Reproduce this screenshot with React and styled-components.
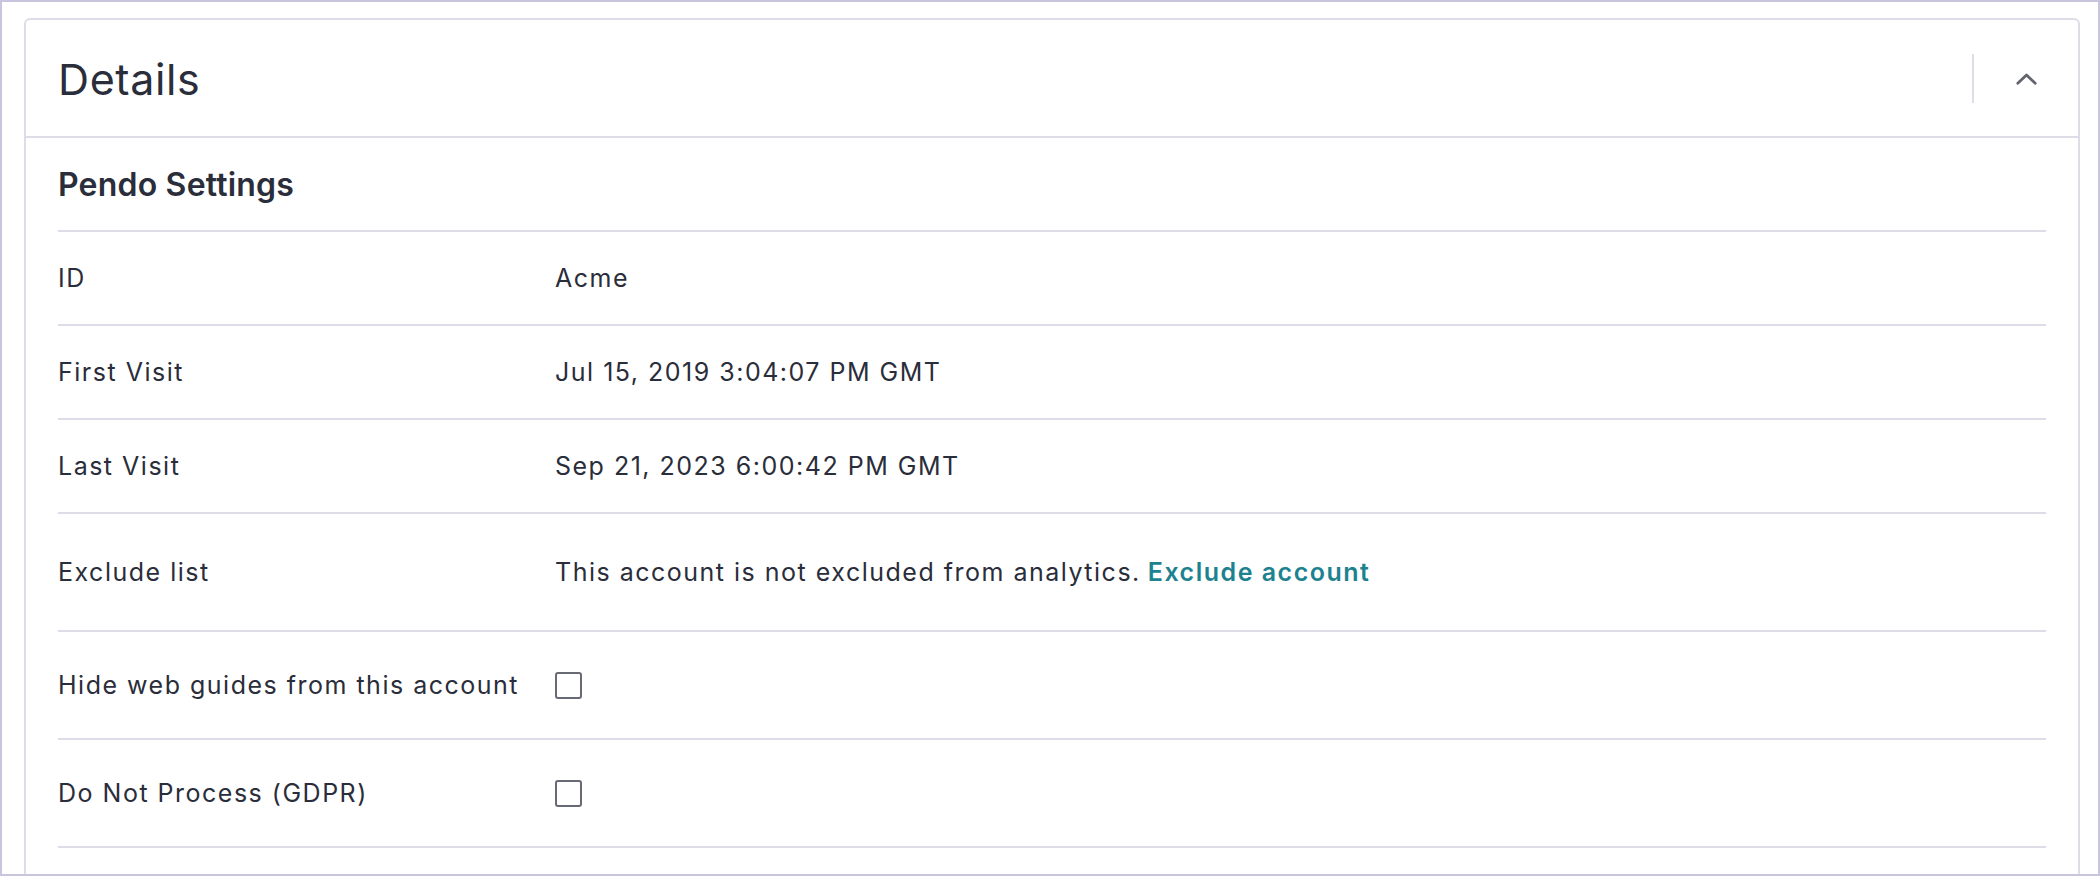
import React, { useState } from 'react';
import styled, { createGlobalStyle } from 'styled-components';

const GlobalStyle = createGlobalStyle`
  html, body {
    margin: 0;
    padding: 0;
    height: 100%;
    overflow: hidden;
    background: #ffffff;
  }
  body {
    font-family: Inter, "Noto Sans", "Liberation Sans", sans-serif;
    color: #2a2d3a;
  }
  * { box-sizing: border-box; }
`;

const Frame = styled.div`
  height: 876px;
  border: 2px solid #c9c5df;
  padding: 16px 18px 0 22px;
  overflow: hidden;
  background: #fff;
`;

const Card = styled.section`
  border: 2px solid #dcdde6;
  border-radius: 6px;
  background: #fff;
  min-height: 1000px;
`;

const Header = styled.header`
  height: 118px;
  display: flex;
  align-items: center;
  gap: 32px;
  padding: 0 32px;
  border-bottom: 2px solid #dcdde6;
`;

const Title = styled.h2`
  flex: 1;
  margin: 0;
  padding-top: 3px;
  font-size: 43px;
  font-weight: 400;
  letter-spacing: 0.6px;
  line-height: 1.2;
  color: #2a2d3a;
`;

const Divider = styled.span`
  width: 2px;
  height: 49px;
  background: #dcdde6;
`;

const ToggleButton = styled.button`
  width: 40px;
  height: 40px;
  margin-top: 2px;
  display: flex;
  align-items: center;
  justify-content: center;
  border: none;
  background: transparent;
  padding: 0;
  cursor: pointer;
  color: #62646e;
`;

const Body = styled.div`
  padding: 0 32px;
`;

const SectionTitle = styled.h3`
  margin: 0;
  padding: 23px 0 21px;
  font-size: 32px;
  font-weight: 600;
  letter-spacing: 0.2px;
  line-height: 48px;
  color: #2a2d3a;
  border-bottom: 2px solid #dcdde6;
`;

const Row = styled.div`
  display: grid;
  grid-template-columns: 25% 1fr;
  align-items: center;
  padding: 28px 0;
  border-bottom: 2px solid #dcdde6;
  font-size: 25px;
  letter-spacing: 1.5px;
  line-height: 36px;
`;

const Label = styled.div`
  color: #2a2d3a;
`;

const Value = styled.div`
  display: flex;
  align-items: center;
  min-height: ${p => p.$tall || 36}px;
  color: #2a2d3a;
`;

const LinkButton = styled.button`
  border: none;
  background: transparent;
  padding: 12px 0 12px 7px;
  font: inherit;
  font-weight: 600;
  letter-spacing: inherit;
  color: #1d8290;
  cursor: pointer;
`;

const Box = styled.input.attrs({ type: 'checkbox' })`
  appearance: none;
  margin: 0;
  width: 27px;
  height: 27px;
  border: 2.5px solid #676a75;
  border-radius: 3px;
  background: #fff;
  cursor: pointer;
  &:checked {
    background: #1d8290;
    border-color: #1d8290;
  }
`;

function Chevron({ open }) {
  return (
    <svg width="21" height="12" viewBox="0 0 21 12" fill="none"
      style={{ transform: open ? 'none' : 'rotate(180deg)' }}>
      <polyline points="1.8,10.2 10.5,2 19.2,10.2" stroke="currentColor"
        strokeWidth="2.8" strokeLinecap="round" strokeLinejoin="round" />
    </svg>
  );
}

const info = [
  { label: 'ID', value: 'Acme' },
  { label: 'First Visit', value: 'Jul 15, 2019 3:04:07 PM GMT' },
  { label: 'Last Visit', value: 'Sep 21, 2023 6:00:42 PM GMT' },
];

export default function App() {
  const [open, setOpen] = useState(true);
  const [hideGuides, setHideGuides] = useState(false);
  const [noProcess, setNoProcess] = useState(false);

  return (
    <>
      <GlobalStyle />
      <Frame>
        <Card>
          <Header>
            <Title>Details</Title>
            <Divider />
            <ToggleButton onClick={() => setOpen(!open)} aria-label="Collapse">
              <Chevron open={open} />
            </ToggleButton>
          </Header>
          {open && (
            <Body>
              <SectionTitle>Pendo Settings</SectionTitle>
              {info.map(item => (
                <Row key={item.label}>
                  <Label>{item.label}</Label>
                  <Value>{item.value}</Value>
                </Row>
              ))}
              <Row>
                <Label>Exclude list</Label>
                <Value $tall={60}>
                  This account is not excluded from analytics.
                  <LinkButton>Exclude account</LinkButton>
                </Value>
              </Row>
              <Row>
                <Label>Hide web guides from this account</Label>
                <Value $tall={50}>
                  <Box checked={hideGuides} onChange={e => setHideGuides(e.target.checked)} />
                </Value>
              </Row>
              <Row>
                <Label>Do Not Process (GDPR)</Label>
                <Value $tall={50}>
                  <Box checked={noProcess} onChange={e => setNoProcess(e.target.checked)} />
                </Value>
              </Row>
            </Body>
          )}
        </Card>
      </Frame>
    </>
  );
}
